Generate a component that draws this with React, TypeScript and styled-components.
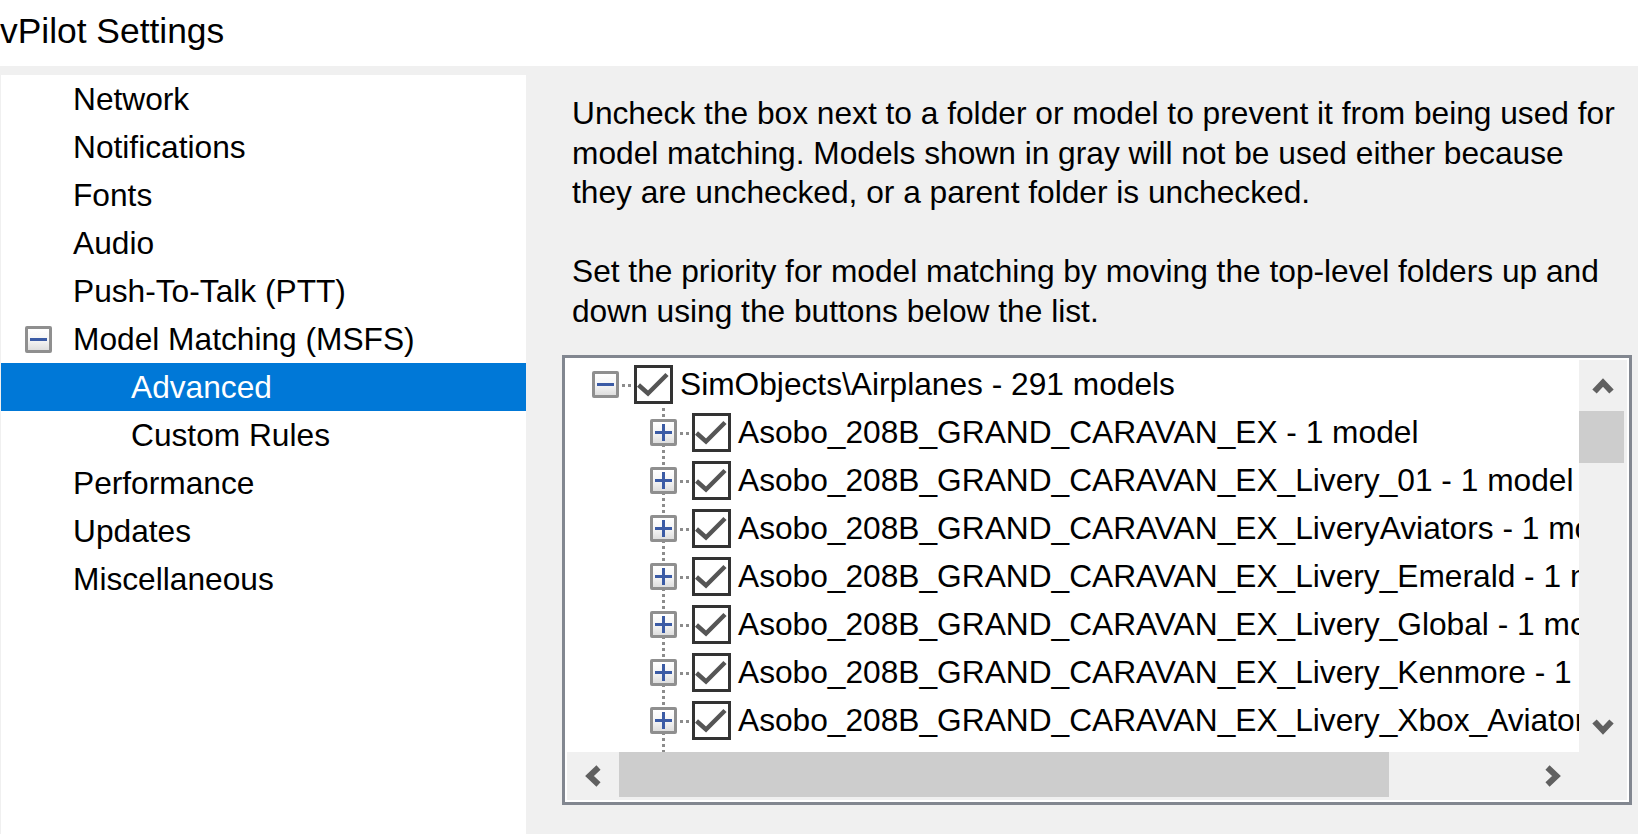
import React from "react";
import styled, { createGlobalStyle } from "styled-components";

const GlobalStyle = createGlobalStyle`
    html, body {
        margin: 0;
        padding: 0;
    }
    body {
        background: #f0f0f0;
        font-family: "Liberation Sans", Arial, sans-serif;
        overflow: hidden;
    }
`;

const Window = styled.div`
    width: 1638px;
    height: 834px;
    display: flex;
    flex-direction: column;
    background: #f0f0f0;
    color: #000;
`;

const TitleBar = styled.div`
    height: 66px;
    flex-shrink: 0;
    background: #ffffff;
    font-size: 35.4px;
    line-height: 62px;
    white-space: nowrap;
`;

const Body = styled.div`
    flex: 1;
    min-height: 0;
    display: flex;
    padding: 9px 0 0 1px;
`;

const NavPanel = styled.div`
    width: 525px;
    flex-shrink: 0;
    background: #ffffff;
`;

const NavItem = styled.div<{ $level: number; $selected?: boolean }>`
    height: 48px;
    display: flex;
    align-items: center;
    padding-left: ${(p) => 24 + p.$level * 58}px;
    font-size: 31.7px;
    line-height: 48px;
    white-space: nowrap;
    background: ${(p) => (p.$selected ? "#0078d7" : "transparent")};
    color: ${(p) => (p.$selected ? "#ffffff" : "#000000")};
`;

const NavSlot = styled.div`
    width: 48px;
    flex-shrink: 0;
    display: flex;
    align-items: center;
`;

const ToggleBox = styled.div`
    width: 27px;
    height: 27px;
    box-sizing: border-box;
    border: 3px solid #8f8f8f;
    border-radius: 2px;
    background: linear-gradient(180deg, #ffffff 0%, #f4f4f4 55%, #dedede 100%);
    display: flex;
    align-items: center;
    justify-content: center;
`;

const Content = styled.div`
    flex: 1;
    min-width: 0;
    padding: 19px 0 0 36px;
`;

const Description = styled.div`
    margin-left: 10px;
    font-size: 31.7px;
    line-height: 39.5px;
    white-space: nowrap;
`;

const Paragraph = styled.p`
    margin: 0 0 39.5px 0;
    &:last-child {
        margin-bottom: 0;
    }
`;

const TreeFrame = styled.div`
    margin-top: 24px;
    width: 1070px;
    height: 450px;
    box-sizing: border-box;
    border: 3px solid #828790;
    padding: 2px;
    background: #ffffff;
    display: grid;
    grid-template-columns: 1fr 48px;
    grid-template-rows: 1fr 48px;
`;

const TreeViewport = styled.div`
    overflow: hidden;
    min-width: 0;
    min-height: 0;
    display: flex;
    flex-direction: column;
`;

const TreeRow = styled.div<{ $level: number }>`
    height: 48px;
    flex-shrink: 0;
    display: flex;
    align-items: center;
    padding-left: ${(p) => 25 + p.$level * 58}px;
    font-size: 31.7px;
    line-height: 48px;
    white-space: nowrap;
`;

const dottedV = `
    background-image: linear-gradient(180deg, #8c8c8c 50%, transparent 50%);
    background-size: 3px 6px;
    background-repeat: repeat-y;
`;

const ExpanderCell = styled.div<{ $line?: boolean }>`
    width: 27px;
    height: 48px;
    flex-shrink: 0;
    display: flex;
    align-items: center;
    justify-content: center;
    ${(p) => (p.$line ? dottedV : "")}
    background-position: 12px 0;
`;

const TreeTail = styled.div<{ $level: number }>`
    flex: 1;
    margin-left: ${(p) => 25 + p.$level * 58 + 12}px;
    width: 3px;
    ${dottedV}
`;

const DotsH = styled.div`
    width: 12px;
    height: 3px;
    flex-shrink: 0;
    margin-top: 2px;
    background-image: linear-gradient(90deg, #8c8c8c 50%, transparent 50%);
    background-size: 6px 3px;
    background-repeat: repeat-x;
    background-position: 3px 0;
`;

const CheckBox = styled.div`
    width: 39px;
    height: 39px;
    box-sizing: border-box;
    flex-shrink: 0;
    margin: 0 7px 0 3px;
    border: 3px solid #333333;
    background: #ffffff;
    display: flex;
    align-items: center;
    justify-content: center;
`;

const ScrollTrack = styled.div<{ $vertical?: boolean }>`
    background: #f0f0f0;
    display: flex;
    flex-direction: ${(p) => (p.$vertical ? "column" : "row")};
    min-width: 0;
    min-height: 0;
`;

const ScrollButton = styled.div<{ $vertical?: boolean }>`
    flex-shrink: 0;
    width: ${(p) => (p.$vertical ? "48px" : "52px")};
    height: ${(p) => (p.$vertical ? "51px" : "48px")};
    display: flex;
    align-items: center;
    justify-content: center;
`;

const ScrollSpace = styled.div`
    flex: 1;
    min-width: 0;
    min-height: 0;
    display: flex;
`;

const Thumb = styled.div<{ $vertical?: boolean }>`
    background: #cdcdcd;
    ${(p) =>
        p.$vertical
            ? "width: 45px; height: 52px;"
            : "height: 45px; width: 770px;"}
`;

const Corner = styled.div`
    background: #f0f0f0;
`;

const Chevron: React.FC<{ dir: "up" | "down" | "left" | "right" }> = ({ dir }) => {
    const rot = { up: 0, right: 90, down: 180, left: 270 }[dir];
    return (
        <svg width="22" height="22" viewBox="0 0 22 22" style={{ transform: `rotate(${rot}deg)` }}>
            <polyline
                points="2.5,16.5 11,7.5 19.5,16.5"
                fill="none"
                stroke="#606060"
                strokeWidth="6"
                strokeLinejoin="miter"
            />
        </svg>
    );
};

const Sign: React.FC<{ plus?: boolean }> = ({ plus }) => (
    <svg width="17" height="17" viewBox="0 0 17 17">
        <rect x="0" y="7" width="17" height="3" fill="#3b5ba5" />
        {plus && <rect x="7" y="0" width="3" height="17" fill="#3b5ba5" />}
    </svg>
);

const Tick = () => (
    <svg width="33" height="33" viewBox="0 0 33 33">
        <polyline points="1.5,17 11,25.5 30,6.5" fill="none" stroke="#555555" strokeWidth="4.5" />
    </svg>
);

const navItems = [
    { label: "Network", level: 0 },
    { label: "Notifications", level: 0 },
    { label: "Fonts", level: 0 },
    { label: "Audio", level: 0 },
    { label: "Push-To-Talk (PTT)", level: 0 },
    { label: "Model Matching (MSFS)", level: 0, expanded: true },
    { label: "Advanced", level: 1, selected: true },
    { label: "Custom Rules", level: 1 },
    { label: "Performance", level: 0 },
    { label: "Updates", level: 0 },
    { label: "Miscellaneous", level: 0 },
];

const models = [
    "Asobo_208B_GRAND_CARAVAN_EX - 1 model",
    "Asobo_208B_GRAND_CARAVAN_EX_Livery_01 - 1 model",
    "Asobo_208B_GRAND_CARAVAN_EX_LiveryAviators - 1 model",
    "Asobo_208B_GRAND_CARAVAN_EX_Livery_Emerald - 1 model",
    "Asobo_208B_GRAND_CARAVAN_EX_Livery_Global - 1 model",
    "Asobo_208B_GRAND_CARAVAN_EX_Livery_Kenmore - 1 model",
    "Asobo_208B_GRAND_CARAVAN_EX_Livery_Xbox_Aviators - 1 model",
];

const App: React.FC = () => {
    return (
        <>
            <GlobalStyle />
            <Window>
                <TitleBar>vPilot Settings</TitleBar>
                <Body>
                    <NavPanel>
                        {navItems.map((item) => (
                            <NavItem key={item.label} $level={item.level} $selected={item.selected}>
                                <NavSlot>
                                    {item.expanded && (
                                        <ToggleBox>
                                            <Sign />
                                        </ToggleBox>
                                    )}
                                </NavSlot>
                                {item.label}
                            </NavItem>
                        ))}
                    </NavPanel>
                    <Content>
                        <Description>
                            <Paragraph>
                                Uncheck the box next to a folder or model to prevent it from being used for
                                <br />
                                model matching. Models shown in gray will not be used either because
                                <br />
                                they are unchecked, or a parent folder is unchecked.
                            </Paragraph>
                            <Paragraph>
                                Set the priority for model matching by moving the top-level folders up and
                                <br />
                                down using the buttons below the list.
                            </Paragraph>
                        </Description>
                        <TreeFrame>
                            <TreeViewport>
                                <TreeRow $level={0}>
                                    <ExpanderCell>
                                        <ToggleBox>
                                            <Sign />
                                        </ToggleBox>
                                    </ExpanderCell>
                                    <DotsH />
                                    <CheckBox>
                                        <Tick />
                                    </CheckBox>
                                    {"SimObjects\\Airplanes - 291 models"}
                                </TreeRow>
                                {models.map((m) => (
                                    <TreeRow key={m} $level={1}>
                                        <ExpanderCell $line>
                                            <ToggleBox>
                                                <Sign plus />
                                            </ToggleBox>
                                        </ExpanderCell>
                                        <DotsH />
                                        <CheckBox>
                                            <Tick />
                                        </CheckBox>
                                        {m}
                                    </TreeRow>
                                ))}
                                <TreeTail $level={1} />
                            </TreeViewport>
                            <ScrollTrack $vertical>
                                <ScrollButton $vertical>
                                    <Chevron dir="up" />
                                </ScrollButton>
                                <ScrollSpace>
                                    <Thumb $vertical />
                                </ScrollSpace>
                                <ScrollButton $vertical>
                                    <Chevron dir="down" />
                                </ScrollButton>
                            </ScrollTrack>
                            <ScrollTrack>
                                <ScrollButton>
                                    <Chevron dir="left" />
                                </ScrollButton>
                                <ScrollSpace>
                                    <Thumb />
                                </ScrollSpace>
                                <ScrollButton>
                                    <Chevron dir="right" />
                                </ScrollButton>
                            </ScrollTrack>
                            <Corner />
                        </TreeFrame>
                    </Content>
                </Body>
            </Window>
        </>
    );
};

export default App;
